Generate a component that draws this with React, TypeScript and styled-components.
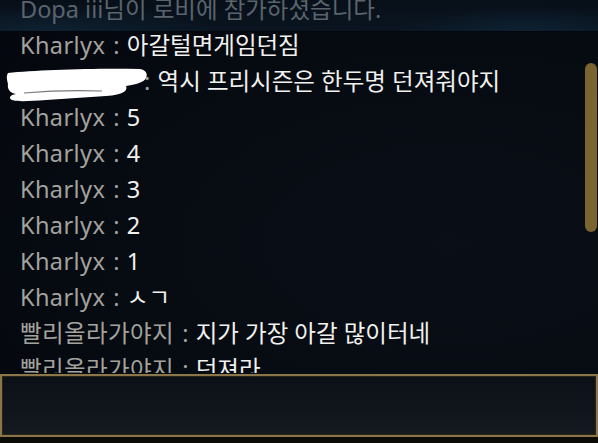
import React from "react";
import styled, { createGlobalStyle } from "styled-components";

const Global = createGlobalStyle`
  html, body { margin: 0; padding: 0; background: #05090f; }
  body { width: 598px; height: 443px; overflow: hidden; }
  #root { width: 598px; height: 443px; }
`;

const Panel = styled.div`
  position: relative;
  width: 598px;
  height: 443px;
  display: flex;
  flex-direction: column;
  background: radial-gradient(ellipse at 75% 55%, #0a0f17 0%, #060a11 60%, #04070d 100%);
  font-family: "Noto Sans", "Noto Sans CJK KR", sans-serif;
  overflow: hidden;
`;

const ChatArea = styled.div`
  position: relative;
  height: 373px;
  flex: none;
  overflow: hidden;
`;

const HeaderGlow = styled.div`
  position: absolute;
  left: 0;
  top: 0;
  right: 0;
  height: 31px;
  pointer-events: none;
  background:
    radial-gradient(ellipse 40% 120% at 8% 100%, rgba(20, 48, 70, 0.45), transparent 70%),
    radial-gradient(ellipse 30% 110% at 88% 100%, rgba(16, 44, 66, 0.55), transparent 70%),
    linear-gradient(180deg, rgba(10, 22, 34, 0.5), rgba(14, 30, 46, 0.55));
  border-bottom: 1px solid rgba(4, 8, 12, 0.9);
`;

const MessageList = styled.div`
  display: flex;
  flex-direction: column;
  margin-top: -9px;
  padding-left: 20px;
`;

const Line = styled.div`
  position: relative;
  height: 36px;
  line-height: 36px;
  font-size: 23.5px;
  white-space: nowrap;
`;

const SystemText = styled.span`
  color: #5a646d;
`;

const Name = styled.span`
  color: #a3a39e;
  letter-spacing: 0.4px;
`;

const Separator = styled.span`
  color: #a3a39e;
  margin: 0 1px 0 2px;
`;

const Body = styled.span`
  color: #f1f1ee;
`;

const Hidden = styled.span`
  position: relative;
  display: inline-block;
  width: 116px;
  height: 36px;
  vertical-align: top;
`;

const Scribble = styled.svg`
  position: absolute;
  left: -14px;
  top: 5px;
  width: 142px;
  height: 34px;
`;

const ScrollThumb = styled.div`
  position: absolute;
  left: 585px;
  top: 63px;
  width: 12px;
  height: 169px;
  border-radius: 6px;
  background: #7a6531;
`;

const InputBox = styled.div`
  margin-top: 1px;
  height: 59px;
  border: 2px solid #8a7649;
  background: linear-gradient(180deg, #0c1118 0%, #10151c 60%, #151a21 100%);
  box-shadow: inset 0 0 0 1px #2a2418;
`;

const Footer = styled.div`
  flex: 1;
  background: #0b0a07;
`;

type Msg = { name?: string; text: string; system?: boolean; hidden?: boolean };

const messages: Msg[] = [
  { system: true, text: "Dopa iii님이 로비에 참가하셨습니다." },
  { name: "Kharlyx", text: "아갈털면게임던짐" },
  { hidden: true, text: "역시 프리시즌은 한두명 던져줘야지" },
  { name: "Kharlyx", text: "5" },
  { name: "Kharlyx", text: "4" },
  { name: "Kharlyx", text: "3" },
  { name: "Kharlyx", text: "2" },
  { name: "Kharlyx", text: "1" },
  { name: "Kharlyx", text: "ㅅㄱ" },
  { name: "빨리올라가야지", text: "지가 가장 아갈 많이터네" },
  { name: "빨리올라가야지", text: "던져라" },
];

export default function App() {
  return (
    <>
      <Global />
      <Panel>
        <ChatArea>
          <HeaderGlow />
          <MessageList>
            {messages.map((m, i) => (
              <Line key={i}>
                {m.system ? (
                  <SystemText>{m.text}</SystemText>
                ) : (
                  <>
                    {m.hidden ? (
                      <Hidden>
                        <Scribble viewBox="0 0 142 34">
                          <path
                            d="M2 5 C30 2 90 0 134 1 C140 2 142 6 140 10 C138 14 132 16 120 18 C122 22 118 27 100 28 C80 29 60 31 40 32 C25 33 12 34 6 32 C2 30 4 27 10 26 C4 25 1 21 2 16 C1 12 0 8 2 5 Z"
                            fill="#ffffff"
                          />
                          <path
                            d="M18 25 C40 23 70 22 96 23"
                            stroke="#1a1e24"
                            strokeWidth="1.2"
                            fill="none"
                            opacity="0.6"
                          />
                        </Scribble>
                      </Hidden>
                    ) : (
                      <Name>{m.name}</Name>
                    )}
                    <Separator> : </Separator>
                    <Body>{m.text}</Body>
                  </>
                )}
              </Line>
            ))}
          </MessageList>
          <ScrollThumb />
        </ChatArea>
        <InputBox />
        <Footer />
      </Panel>
    </>
  );
}
